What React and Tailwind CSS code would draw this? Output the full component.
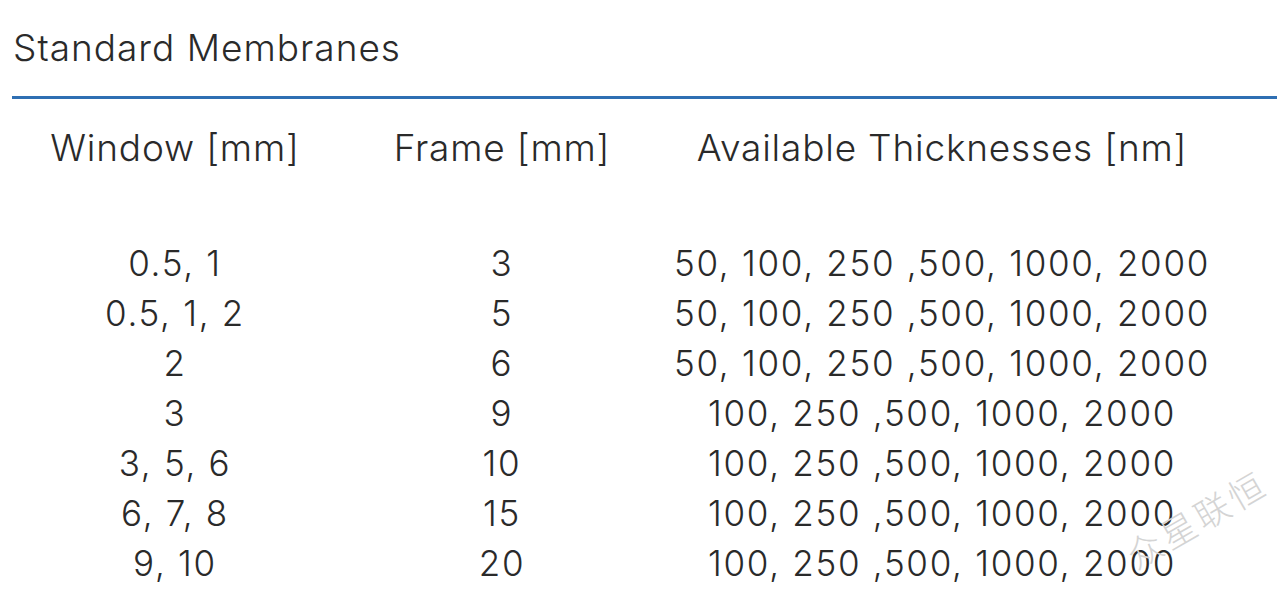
const rows = [
  ['0.5, 1', '3', '50, 100, 250 ,500, 1000, 2000'],
  ['0.5, 1, 2', '5', '50, 100, 250 ,500, 1000, 2000'],
  ['2', '6', '50, 100, 250 ,500, 1000, 2000'],
  ['3', '9', '100, 250 ,500, 1000, 2000'],
  ['3, 5, 6', '10', '100, 250 ,500, 1000, 2000'],
  ['6, 7, 8', '15', '100, 250 ,500, 1000, 2000'],
  ['9, 10', '20', '100, 250 ,500, 1000, 2000'],
]

const App = () => {
  return (
    <div
      className="relative w-[1277px] h-[603px] overflow-hidden bg-white text-[#2a2a2a] font-light"
      style={{ fontFamily: 'Inter, "Liberation Sans", sans-serif' }}
    >
      <div className="pl-[12px]">
        <h1 className="pt-[26px] pl-[1px] text-[37px] leading-[44px] h-[96px] font-light tracking-[1px]">
          Standard Membranes
        </h1>
        <div className="h-[3px] bg-[#2f6fb3]" />
      </div>

      <div className="pl-[12px] pt-[27px]">
        <div className="grid grid-cols-[326px_328px_552px] text-[37px] leading-[44px] text-center h-[92px] tracking-[0.8px]">
          <div>Window [mm]</div>
          <div>Frame [mm]</div>
          <div>Available Thicknesses [nm]</div>
        </div>
        <div className="mt-[20px]">
          {rows.map((r, i) => (
            <div
              key={i}
              className="grid grid-cols-[326px_328px_552px] text-[35px] leading-[50px] text-center tracking-[1.7px]"
            >
              <div>{r[0]}</div>
              <div>{r[1]}</div>
              <div>{r[2]}</div>
            </div>
          ))}
        </div>
      </div>

      <div
        className="absolute left-[1118px] top-[500px] -rotate-[30deg] whitespace-nowrap text-[35px] leading-none text-[#d4d4d4] tracking-[4px] pointer-events-none"
        style={{ fontFamily: '"Noto Sans CJK SC", sans-serif', fontWeight: 300 }}
      >
        众星联恒
      </div>
    </div>
  )
}

export default App
